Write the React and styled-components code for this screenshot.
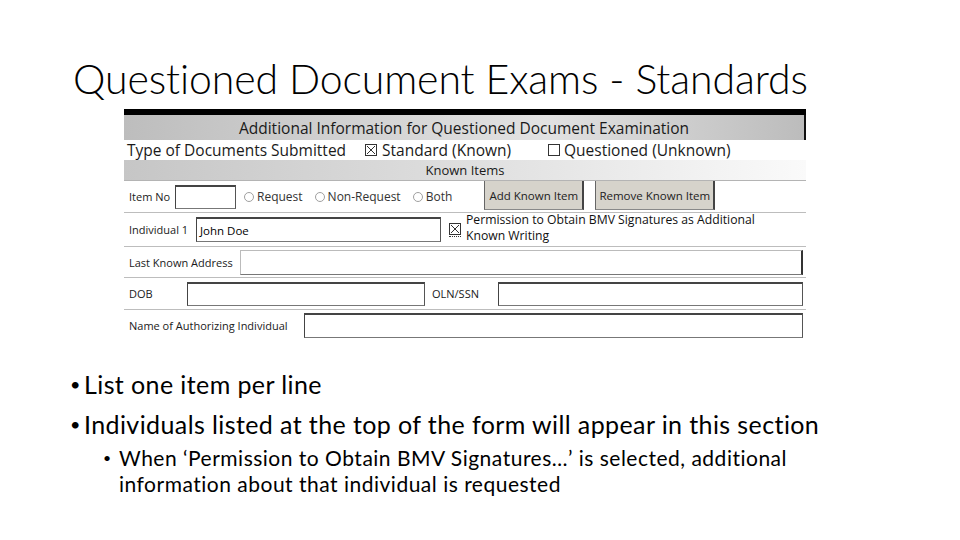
import styled, { createGlobalStyle } from "styled-components";

const GlobalStyle = createGlobalStyle`
  html, body {
    margin: 0;
    padding: 0;
    background: #ffffff;
  }
  #root {
    width: 960px;
    height: 540px;
    overflow: hidden;
  }
`;

const Slide = styled.div`
  width: 960px;
  height: 540px;
  box-sizing: border-box;
  padding-top: 52px;
  font-family: "Lato", "Liberation Sans", sans-serif;
  color: #000;
`;

const Title = styled.h1`
  margin: 0 0 0 73px;
  font-size: 41px;
  font-weight: 300;
  line-height: 54px;
  letter-spacing: -0.1px;
`;

// the scanned form
const Form = styled.div`
  width: 682px;
  margin: 3px 0 0 124px;
  font-family: "Open Sans", "Noto Sans", sans-serif;
  color: #1a1a1a;
`;

const BlackBar = styled.div`
  height: 6px;
  background: #000;
`;

const Header = styled.div`
  height: 25px;
  display: flex;
  align-items: center;
  justify-content: center;
  font-size: 15.5px;
  background: linear-gradient(90deg, #bdbdbd 0%, #d0d0d0 30%, #e2e2e2 62%, #bcbcbc 100%);
  border-right: 2px solid #111;
  box-sizing: border-box;
`;

const TypeRow = styled.div`
  height: 20px;
  display: flex;
  align-items: center;
  padding-left: 3px;
  font-size: 15.5px;
`;

const SubHeader = styled.div`
  height: 20px;
  display: flex;
  align-items: center;
  justify-content: center;
  font-size: 13px;
  font-weight: 500;
  background: linear-gradient(90deg, #c6c6c6 0%, #dcdcdc 45%, #fafafa 100%);
  border-bottom: 1px solid #b4b4b4;
`;

const Row = styled.div`
  height: ${({ $h }) => $h}px;
  display: flex;
  align-items: center;
  padding-left: 5px;
  padding-right: 3px;
  font-size: 11px;
  border-bottom: ${({ $last }) => ($last ? "none" : "1px solid #bdbdbd")};
`;

const Label = styled.span`
  flex: none;
  width: ${({ $w }) => $w}px;
  margin-left: ${({ $ml }) => $ml || 0}px;
  white-space: nowrap;
`;

const Input = styled.div`
  flex: ${({ $w }) => ($w ? "none" : "1")};
  width: ${({ $w }) => ($w ? `${$w}px` : "auto")};
  height: ${({ $h }) => $h || 24}px;
  box-sizing: border-box;
  border: 1px solid #777;
  border-top: ${({ $light }) => ($light ? "1px solid #bbb" : "2px solid #444")};
  border-left: ${({ $light }) => ($light ? "1px solid #bbb" : "1px solid #444")};
  border-right: ${({ $light }) => ($light ? "2px solid #333" : "1px solid #555")};
  background: #fff;
  display: flex;
  align-items: center;
  padding-left: 3px;
  font-size: 11.5px;
  color: #000;
`;

const RadioGroup = styled.div`
  display: flex;
  align-items: center;
  margin-left: ${({ $ml }) => $ml}px;
  color: #333;
  font-size: 12px;
  gap: 3px;
`;

const Radio = styled.span`
  width: 10px;
  height: 10px;
  border-radius: 50%;
  border: 1px solid #a0a0a0;
  box-sizing: border-box;
  background: #fff;
`;

const FormButton = styled.div`
  align-self: flex-start;
  height: 29px;
  width: ${({ $w }) => $w}px;
  margin-left: ${({ $ml }) => $ml}px;
  box-sizing: border-box;
  background: #d6d3cb;
  border-left: 1px solid #666;
  border-right: 2px solid #444;
  border-bottom: 1px solid #888;
  display: flex;
  align-items: center;
  justify-content: center;
  font-size: 11.5px;
  color: #222;
`;

const Check = styled.span`
  display: inline-flex;
  margin: 0 ${({ $mr }) => $mr || 4}px 0 ${({ $ml }) => $ml || 0}px;
  border-bottom: ${({ $focus }) => ($focus ? "1px dotted #333" : "none")};
  padding-bottom: ${({ $focus }) => ($focus ? "1px" : "0")};
`;

const Permission = styled.span`
  font-size: 12.2px;
  line-height: 16px;
  color: #111;
  margin-top: -4px;
`;

const Bullets = styled.ul`
  list-style: none;
  width: 770px;
  margin: 23px 0 0 70px;
  padding: 0;
`;

const Bullet = styled.li`
  display: flex;
  font-size: ${({ $sub }) => ($sub ? 21 : 25)}px;
  letter-spacing: ${({ $sub }) => ($sub ? 0.5 : 0.4)}px;
  line-height: ${({ $sub }) => ($sub ? 26 : 40)}px;
  margin-left: ${({ $sub }) => ($sub ? 33 : 0)}px;
  margin-top: ${({ $sub }) => ($sub ? 1 : 0)}px;

  &::before {
    content: "•";
    flex: none;
    width: ${({ $sub }) => ($sub ? 16 : 14)}px;
    font-size: ${({ $sub }) => ($sub ? 14 : 18)}px;
  }
`;

const CheckBox = ({ checked }) => (
  <svg width="12" height="12" viewBox="0 0 12 12">
    <rect x="0.5" y="0.5" width="11" height="11" fill="#fff" stroke="#333" />
    {checked && <path d="M2 2 L10 10 M10 2 L2 10" stroke="#333" strokeWidth="1" />}
  </svg>
);

const RadioOption = ({ label, ml }) => (
  <RadioGroup $ml={ml}>
    <Radio />
    {label}
  </RadioGroup>
);

export default function App() {
  return (
    <>
      <GlobalStyle />
      <Slide>
        <Title>Questioned Document Exams - Standards</Title>
        <Form>
          <BlackBar />
          <Header>Additional Information for Questioned Document Examination</Header>
          <TypeRow>
            <Label $w={238}>Type of Documents Submitted</Label>
            <Check $mr={5}>
              <CheckBox checked />
            </Check>
            <Label $w={166}>Standard (Known)</Label>
            <Check $mr={4}>
              <CheckBox />
            </Check>
            Questioned (Unknown)
          </TypeRow>
          <SubHeader>Known Items</SubHeader>
          <Row $h={31}>
            <Label $w={46}>Item No</Label>
            <Input $w={61} />
            <RadioOption label="Request" ml={8} />
            <RadioOption label="Non-Request" ml={12} />
            <RadioOption label="Both" ml={12} />
            <FormButton $w={100} $ml={32}>Add Known Item</FormButton>
            <FormButton $w={120} $ml={11}>Remove Known Item</FormButton>
          </Row>
          <Row $h={33}>
            <Label $w={67}>Individual 1</Label>
            <Input $w={245} $h={25}>John Doe</Input>
            <Check $ml={8} $mr={5} $focus>
              <CheckBox checked />
            </Check>
            <Permission>
              Permission to Obtain BMV Signatures as Additional
              <br />
              Known Writing
            </Permission>
          </Row>
          <Row $h={30}>
            <Label $w={111}>Last Known Address</Label>
            <Input $h={25} $light />
          </Row>
          <Row $h={31}>
            <Label $w={58}>DOB</Label>
            <Input $w={238} />
            <Label $w={66} $ml={7}>OLN/SSN</Label>
            <Input />
          </Row>
          <Row $h={31} $last>
            <Label $w={175}>Name of Authorizing Individual</Label>
            <Input $h={25} />
          </Row>
        </Form>
        <Bullets>
          <Bullet>List one item per line</Bullet>
          <Bullet>Individuals listed at the top of the form will appear in this section</Bullet>
          <Bullet $sub>
            When ‘Permission to Obtain BMV Signatures…’ is selected, additional information about that
            individual is requested
          </Bullet>
        </Bullets>
      </Slide>
    </>
  );
}
